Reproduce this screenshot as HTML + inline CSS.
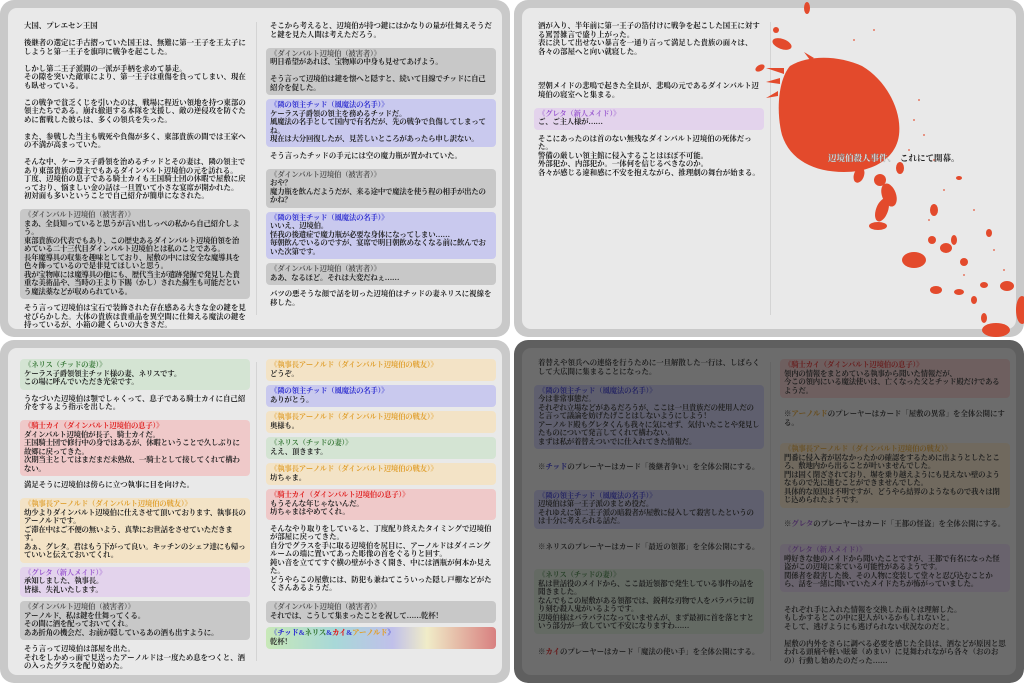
<!DOCTYPE html>
<html><head><meta charset="utf-8">
<style>
*{margin:0;padding:0;box-sizing:border-box}
body{width:1024px;height:683px;background:#fff;position:relative;overflow:hidden;font-family:"Liberation Serif","Noto Serif CJK SC","Noto Sans CJK JP",serif;font-weight:bold;font-size:7.4px;line-height:8.5px;color:#222}
.pn{position:absolute;width:510px;height:337px;background:#c9c9c9;border-radius:14px;overflow:hidden}
.in{position:absolute;left:8px;top:8px;right:8px;bottom:8px;background:#e9e9e9;border-radius:9px;overflow:hidden}
.div{position:absolute;left:248px;top:14px;bottom:14px;width:1px;background:#d4d4d4}
.c{position:absolute;top:14px;width:230px}
.l{left:12px}.r{left:258px}
p{margin-bottom:8.5px;padding:0 4px}
.b{border-radius:4px;padding:2px 4px 3px;margin-bottom:4px;letter-spacing:-0.2px}
.g{background:#c8c8c8}.bl{background:#c9c9ee}.rd{background:#efc9c9}.or{background:#f3e3c6}.gr{background:#d4e4d3}.pu{background:#e3d3ec}
.b span{display:block;font-weight:bold}
.g span{color:#555}.bl span{color:#3030d0}.rd span{color:#e02020}.or span{color:#e0a030}.gr span{color:#3a7a3a}.pu span{color:#9b5bd0}
.rb{background:linear-gradient(90deg,#c8e8b8,#a8d8d8 30%,#c0c0ea 55%,#f0ecc8 70%,#d88080)}
.rb span{color:#3030d0}
.ov{position:absolute;left:0;top:0;right:0;bottom:0;background:rgba(30,30,30,.62);border-radius:14px}
.n{margin-top:5px}
.s{margin-top:14px;margin-bottom:18px}
.s2{margin-top:12px;margin-bottom:16px}
</style></head><body>

<div class="pn" style="left:0;top:0"><div class="in">
<div class="div"></div>
<div class="c l">
<p>大国、プレエセン王国</p>
<p>後継者の選定に手古摺っていた国王は、無難に第一王子を王太子にしようと第一王子を旗印に戦争を起こした。</p>
<p>しかし第二王子派閥の一派が手柄を求めて暴走。<br>その隙を突いた敵軍により、第一王子は重傷を負ってしまい、現在も臥せっている。</p>
<p>この戦争で貧乏くじを引いたのは、戦場に程近い領地を持つ東部の領主たちである。崩れ撤退する本隊を支援し、敵の逆侵攻を防ぐために奮戦した彼らは、多くの領兵を失った。</p>
<p>また、参戦した当主も戦死や負傷が多く、東部貴族の間では王家への不満が高まっていた。</p>
<p>そんな中、ケーラス子爵領を治めるチッドとその妻は、隣の領主であり東部貴族の盟主でもあるダインバルト辺境伯の元を訪れる。<br>丁度、辺境伯の息子である騎士カイも王国騎士団の休暇で屋敷に戻っており、悩ましい金の話は一旦置いて小さな宴席が開かれた。<br>初対面も多いということで自己紹介が簡単になされた。</p>
<div class="b g"><span>《ダインバルト辺境伯（被害者）》</span>まあ、全員知っていると思うが言い出しっぺの私から自己紹介しよう。<br>東部貴族の代表でもあり、この歴史あるダインバルト辺境伯領を治めている二十三代目ダインバルト辺境伯とは私のことである。<br>長年魔導具の収集を趣味としており、屋敷の中には安全な魔導具を色々飾っているので是非見てほしいと思う。<br>我が宝物庫には魔導具の他にも、歴代当主が遺跡発掘で発見した貴重な美術品や、当時の王より下賜（かし）された蘇生も可能だという魔法薬などが収められている。</div>
<p class="n">そう言って辺境伯は宝石で装飾された存在感ある大きな金の鍵を見せびらかした。大体の貴族は貴重品を異空間に仕舞える魔法の鍵を持っているが、小箱の鍵くらいの大きさだ。</p>
</div>
<div class="c r">
<p>そこから考えると、辺境伯が持つ鍵にはかなりの量が仕舞えそうだと鍵を見た人間は考えただろう。</p>
<div class="b g"><span>《ダインバルト辺境伯（被害者）》</span>明日希望があれば、宝物庫の中身も見せてあげよう。<br><br>そう言って辺境伯は鍵を懐へと隠すと、続いて目線でチッドに自己紹介を促した。</div>
<div class="b bl"><span>《隣の領主チッド（風魔法の名手）》</span>ケーラス子爵領の領主を務めるチッドだ。<br>風魔法の名手として国内で有名だが、先の戦争で負傷してしまってね。<br>現在は大分回復したが、見苦しいところがあったら申し訳ない。</div>
<p class="n">そう言ったチッドの手元には空の魔力瓶が置かれていた。</p>
<div class="b g"><span>《ダインバルト辺境伯（被害者）》</span>おや？<br>魔力瓶を飲んだようだが、来る途中で魔法を使う程の相手が出たのかね？</div>
<div class="b bl"><span>《隣の領主チッド（風魔法の名手）》</span>いいえ、辺境伯。<br>怪我の後遺症で魔力瓶が必要な身体になってしまい……<br>毎朝飲んでいるのですが、宴席で明日朝飲めなくなる前に飲んでおいた次第です。</div>
<div class="b g"><span>《ダインバルト辺境伯（被害者）》</span>ああ、なるほど。それは大変だねぇ……</div>
<p class="n">バツの悪そうな顔で話を切った辺境伯はチッドの妻ネリスに視線を移した。</p>
</div>
</div></div>

<div class="pn" style="left:514px;top:0"><div class="in">
<div class="div"></div>
<div class="c l">
<p>酒が入り、半年前に第一王子の箔付けに戦争を起こした国王に対する罵詈雑言で盛り上がった。<br>表に決して出せない暴言を一通り言って満足した貴族の面々は、各々の部屋へと向い就寝した。</p>
<p style="margin-top:26px">翌朝メイドの悲鳴で起きた全員が、悲鳴の元であるダインバルト辺境伯の寝室へと集まる。</p>
<div class="b pu"><span>《グレタ（新人メイド）》</span>ご、ご主人様が……</div>
<p class="n">そこにあったのは首のない無残なダインバルト辺境伯の死体だった。<br>警備の厳しい領主館に侵入することはほぼ不可能。<br>外部犯か、内部犯か。一体何を信じるべきなのか。<br>各々が感じる違和感に不安を抱えながら、推理劇の舞台が始まる。</p>
</div>
</div>
<svg style="position:absolute;left:0;top:0" width="510" height="337" viewBox="0 0 510 337">
<g fill="#e34a2c">
<path d="M276 66 C296 54 326 56 348 66 C372 80 388 110 385 135 C382 158 360 172 330 172 C300 172 276 160 268 135 C262 112 264 80 276 66Z"/>
<path d="M270 74 l-18 -6 l18 0 z M266 84 l-14 -2 l14 -4z M264 96 l-12 2 l12 -7z M296 60 l-6 -8 l10 6z"/>
<ellipse cx="268" cy="44" rx="10" ry="5" transform="rotate(20 268 44)"/>
<ellipse cx="246" cy="68" rx="5" ry="3" transform="rotate(-30 246 68)"/>
<ellipse cx="293" cy="8" rx="3" ry="6"/>
<ellipse cx="262" cy="30" rx="3" ry="3"/>
<ellipse cx="345" cy="175" rx="5" ry="8" transform="rotate(20 345 175)"/>
<ellipse cx="366" cy="180" rx="6" ry="6"/>
<ellipse cx="375" cy="195" rx="7" ry="12" transform="rotate(-20 375 195)"/>
<ellipse cx="368" cy="210" rx="6" ry="12" transform="rotate(20 368 210)"/>
<ellipse cx="364" cy="226" rx="9" ry="4"/>
<ellipse cx="386" cy="168" rx="4" ry="6"/>
<ellipse cx="400" cy="260" rx="12" ry="8"/>
<ellipse cx="420" cy="210" rx="4" ry="6"/>
<ellipse cx="432" cy="248" rx="6" ry="5"/>
<ellipse cx="418" cy="240" rx="4" ry="4"/>
<ellipse cx="440" cy="240" rx="3" ry="5"/>
<ellipse cx="450" cy="262" rx="4" ry="4"/>
<ellipse cx="422" cy="290" rx="6" ry="4"/>
<ellipse cx="445" cy="292" rx="5" ry="3"/>
<ellipse cx="470" cy="285" rx="4" ry="3"/>
<ellipse cx="493" cy="286" rx="7" ry="5"/>
<ellipse cx="482" cy="330" rx="14" ry="7"/>
<ellipse cx="508" cy="310" rx="6" ry="14"/>
<ellipse cx="470" cy="318" rx="3" ry="5"/>
<ellipse cx="460" cy="300" rx="3" ry="4"/>
<ellipse cx="445" cy="178" rx="3" ry="2"/>
<ellipse cx="475" cy="233" rx="3" ry="4"/>
</g>
<g fill="#e34a2c" opacity=".7">
<circle cx="400" cy="120" r="1"/><circle cx="410" cy="135" r="1"/><circle cx="395" cy="150" r="1"/><circle cx="420" cy="160" r="1"/><circle cx="430" cy="190" r="1"/><circle cx="460" cy="210" r="1"/><circle cx="480" cy="250" r="1"/><circle cx="450" cy="275" r="1"/><circle cx="405" cy="100" r="1"/><circle cx="340" cy="40" r="1"/><circle cx="360" cy="30" r="1"/><circle cx="415" cy="220" r="1"/><circle cx="490" cy="270" r="1"/>
</g>
<text x="314" y="161" font-size="8.5" font-weight="bold" fill="#f4f4f4" stroke="#888" stroke-width=".3" font-family="Liberation Serif, Noto Serif CJK SC, serif">辺境伯殺人事件、</text>
<text x="386" y="161" font-size="8.5" font-weight="bold" fill="#222" font-family="Liberation Serif, Noto Serif CJK SC, serif">これにて開幕。</text>
</svg>
</div>

<div class="pn" style="left:0;top:340px;height:343px"><div class="in">
<div class="div"></div>
<div class="c l" style="top:11px">
<div class="b gr"><span>《ネリス（チッドの妻）》</span>ケーラス子爵領領主チッド様の妻、ネリスです。<br>この場に呼んでいただき光栄です。</div>
<p class="n">うなづいた辺境伯は顎でしゃくって、息子である騎士カイに自己紹介をするよう指示を出した。</p>
<div class="b rd"><span>《騎士カイ（ダインバルト辺境伯の息子）》</span>ダインバルト辺境伯が長子、騎士カイだ。<br>王国騎士団で修行中の身ではあるが、休暇ということで久しぶりに故郷に戻ってきた。<br>次期当主としてはまだまだ未熟故、一騎士として接してくれて構わない。</div>
<p class="n">満足そうに辺境伯は傍らに立つ執事に目を向けた。</p>
<div class="b or"><span>《執事長アーノルド（ダインバルト辺境伯の戦友）》</span>幼少よりダインバルト辺境伯に仕えさせて頂いております、執事長のアーノルドです。<br>ご滞在中はご不便の無いよう、真摯にお世話をさせていただきます。<br>あぁ、グレタ。君はもう下がって良い。キッチンのシェフ達にも帰っていいと伝えておいてくれ。</div>
<div class="b pu"><span>《グレタ（新人メイド）》</span>承知しました、執事長。<br>皆様、失礼いたします。</div>
<div class="b g"><span>《ダインバルト辺境伯（被害者）》</span>アーノルド、私は鍵を仕舞ってくる。<br>その間に酒を配っておいてくれ。<br>ああ折角の機会だ、お前が隠しているあの酒も出すように。</div>
<p class="n">そう言って辺境伯は部屋を出た。<br>それをしかめっ面で見送ったアーノルドは一度ため息をつくと、酒の入ったグラスを配り始めた。</p>
</div>
<div class="c r" style="top:11px">
<div class="b or"><span>《執事長アーノルド（ダインバルト辺境伯の戦友）》</span>どうぞ。</div>
<div class="b bl"><span>《隣の領主チッド（風魔法の名手）》</span>ありがとう。</div>
<div class="b or"><span>《執事長アーノルド（ダインバルト辺境伯の戦友）》</span>奥様も。</div>
<div class="b gr"><span>《ネリス（チッドの妻）》</span>ええ、頂きます。</div>
<div class="b or"><span>《執事長アーノルド（ダインバルト辺境伯の戦友）》</span>坊ちゃま。</div>
<div class="b rd"><span>《騎士カイ（ダインバルト辺境伯の息子）》</span>もうそんな年じゃないんだ。<br>坊ちゃまはやめてくれ。</div>
<p class="n">そんなやり取りをしていると、丁度配り終えたタイミングで辺境伯が部屋に戻ってきた。<br>自分でグラスを手に取る辺境伯を尻目に、アーノルドはダイニングルームの端に置いてあった彫像の首をぐるりと回す。<br>鈍い音を立ててすぐ横の壁が小さく開き、中には酒瓶が何本か見えた。<br>どうやらこの屋敷には、防犯も兼ねてこういった隠し戸棚などがたくさんあるようだ。</p>
<div class="b g"><span>《ダインバルト辺境伯（被害者）》</span>それでは、こうして集まったことを祝して……乾杯！</div>
<div class="b rb"><span>《<b style="color:#3030d0">チッド</b>&amp;<b style="color:#3a7a3a">ネリス</b>&amp;<b style="color:#e02020">カイ</b>&amp;<b style="color:#e0a030">アーノルド</b>》</span>乾杯！</div>
</div>
</div></div>

<div class="pn" style="left:514px;top:340px;height:343px"><div class="in">
<div class="div"></div>
<div class="c l" style="top:11px">
<p>着替えや領兵への連絡を行うために一旦解散した一行は、しばらくして大広間に集まることになった。</p>
<div class="b bl"><span>《隣の領主チッド（風魔法の名手）》</span>今は非常事態だ。<br>それぞれ立場などがあるだろうが、ここは一旦貴族だの使用人だのと言って議論を妨げたげことはしないようにしよう！<br>アーノルド殿もグレタくんも我々に気にせず、気付いたことや発見したものについて発言してくれて構わない。<br>まずは私が着替えついでに仕入れてきた情報だ。</div>
<p class="s">※<b style="color:#3030d0">チッド</b>のプレーヤーはカード「後継者争い」を全体公開にする。</p>
<div class="b bl"><span>《隣の領主チッド（風魔法の名手）》</span>辺境伯は第一王子派のまとめ役だ。<br>それゆえに第二王子派の暗殺者が屋敷に侵入して殺害したというのは十分に考えられる話だ。</div>
<p class="s">※ネリスのプレーヤーはカード「最近の領都」を全体公開にする。</p>
<div class="b gr"><span>《ネリス（チッドの妻）》</span>私は世話役のメイドから、ここ最近領都で発生している事件の話を聞きました。<br>なんでもこの屋敷がある領都では、鋭利な刃物で人をバラバラに切り刻む殺人鬼がいるようです。<br>辺境伯様はバラバラになっていませんが、まず最初に首を落とすという部分が一致していて不安になりますわ……</div>
<p class="s">※<b style="color:#e02020">カイ</b>のプレーヤーはカード「魔法の使い手」を全体公開にする。</p>
</div>
<div class="c r" style="top:11px">
<div class="b rd"><span>《騎士カイ（ダインバルト辺境伯の息子）》</span>領内の情報をまとめている執事から聞いた情報だが、<br>今この領内にいる魔法使いは、亡くなった父とチッド殿だけであるようだ。</div>
<p class="s2">※<b style="color:#e0a030">アーノルド</b>のプレーヤーはカード「屋敷の異常」を全体公開にする。</p>
<div class="b or"><span>《執事長アーノルド（ダインバルト辺境伯の戦友）》</span>門番に侵入者が居なかったかの確認をするために出ようとしたところ、敷地内から出ることが叶いませんでした。<br>門は固く閉ざされており、塀を乗り越えようにも見えない壁のようなもので先に進むことができませんでした。<br>具体的な原因は不明ですが、どうやら結界のようなもので我々は閉じ込められたようです。</div>
<p class="s2">※<b style="color:#9b5bd0">グレタ</b>のプレーヤーはカード「王都の怪盗」を全体公開にする。</p>
<div class="b pu"><span>《グレタ（新人メイド）》</span>噂好きな他のメイドから聞いたことですが、王都で有名になった怪盗がこの辺境に来ている可能性があるようです。<br>関係者を殺害した後、その人物に変装して堂々と忍び込むことから、話を一緒に聞いていたメイドたちが怖がっていました。</div>
<p style="margin-top:14px">それぞれ手に入れた情報を交換した面々は理解した。<br>もしかするとこの中に犯人がいるかもしれないと。<br>そして、逃げようにも逃げられない状況なのだと。</p>
<p>屋敷の内外をさらに調べる必要を感じた全員は、酒などが原因と思われる頭痛や軽い眩暈（めまい）に見舞われながら各々（おのおの）行動し始めたのだった……</p>
</div>
</div><div class="ov"></div></div>

</body></html>
